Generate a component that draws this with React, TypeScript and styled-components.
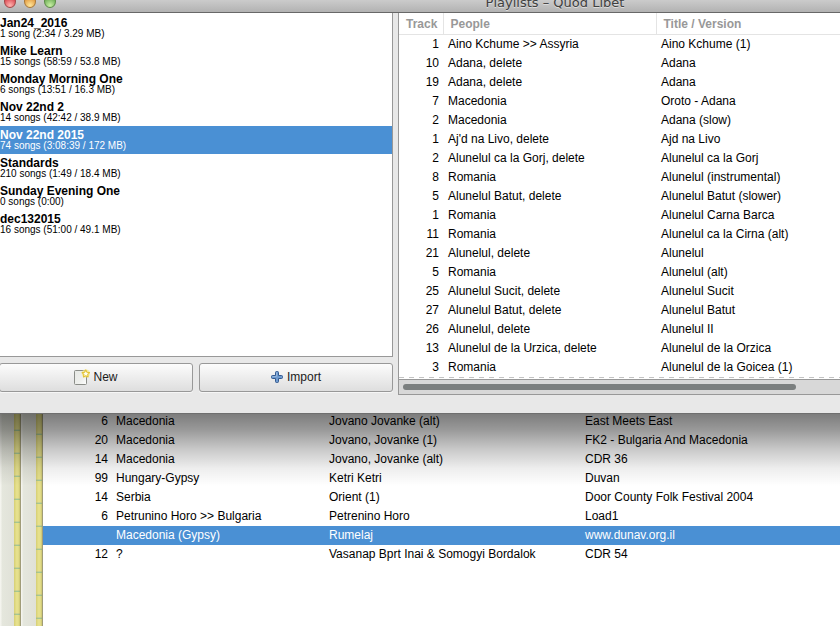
import React from "react";
import styled, { createGlobalStyle } from "styled-components";

const Global = createGlobalStyle`
  html, body, #root { height: 100%; }
  body { margin: 0; overflow: hidden; background: #fff; font: 12px/19px "Liberation Sans", Arial, sans-serif; color: #000; }
  *, *::before, *::after { box-sizing: border-box; }
`;

const Screen = styled.div`
  display: flex;
  flex-direction: column;
  height: 100%;
`;

const Window = styled.section`
  background: #e8e8e8;
  border-bottom: 1px solid #6f6f6f;
`;

const TitleBar = styled.header`
  display: flex;
  align-items: flex-end;
  height: 13px;
  overflow: hidden;
  padding-left: 4px;
  background: linear-gradient(#cbcbcb, #b2b2b2);
  border-bottom: 1px solid #686868;
`;

const Lights = styled.div`
  display: flex;
  flex: none;
  gap: 8px;
  padding-bottom: 4px;
`;

const Light = styled.button<{ $rim: string; $deep: string; $glow: string }>`
  width: 12px;
  height: 13px;
  padding: 0;
  border: 1px solid ${(p) => p.$rim};
  border-radius: 50%;
  background: radial-gradient(circle at 50% 85%, ${(p) => p.$glow}, ${(p) => p.$deep} 75%);
`;

const Title = styled.h1`
  margin: 0;
  flex: 1;
  padding-left: 214px;
  text-align: center;
  font: 13px/18px "DejaVu Sans", sans-serif;
  color: #404040;
  text-shadow: 0 1px 0 #dddddd;
`;

const Panes = styled.div`
  display: grid;
  grid-template-columns: minmax(0, 393fr) minmax(0, 442fr);
  gap: 5px;
  padding-bottom: 18px;
`;

const Side = styled.div`
  display: flex;
  flex-direction: column;
  gap: 6px;
`;

const Playlists = styled.ul`
  flex: 1;
  margin: 0;
  padding: 1px 0 0;
  list-style: none;
  background: #fff;
  border: solid #989898;
  border-width: 0 1px 1px 0;
`;

const Playlist = styled.li<{ $selected?: boolean }>`
  height: 28px;
  padding-top: 3px;
  background: ${(p) => (p.$selected ? "#4a90d4" : "transparent")};
  color: ${(p) => (p.$selected ? "#fff" : "#000")};
`;

const Name = styled.strong`
  display: block;
  line-height: 12px;
`;

const Info = styled.span`
  display: block;
  font-size: 10px;
  line-height: 10px;
`;

const Buttons = styled.div`
  display: grid;
  grid-template-columns: 1fr 1fr;
  gap: 6px;
  margin-left: -1px;
  padding-bottom: 3px;
`;

const PushButton = styled.button`
  display: flex;
  align-items: center;
  justify-content: center;
  gap: 3px;
  height: 29px;
  padding: 0;
  border: 1px solid #989898;
  border-radius: 3px;
  background: linear-gradient(#fcfcfc, #dedede);
  box-shadow: 0 1px 0 #f6f6f6;
  font: inherit;
  color: #1a1a1a;
`;

const SongPane = styled.div`
  display: flex;
  flex-direction: column;
  background: #fff;
  border: solid #989898;
  border-width: 0 0 1px 1px;
`;

const Table = styled.table`
  width: 100%;
  table-layout: fixed;
  border-collapse: collapse;
`;

const Col = styled.col<{ $w?: number }>`
  width: ${(p) => (p.$w ? `${p.$w}px` : "auto")};
`;

const Head = styled.th`
  height: 21px;
  padding: 2px 7px 0;
  text-align: left;
  line-height: 18px;
  color: #989898;
  border-bottom: 1px solid #e4e4e4;
  & + & { border-left: 1px solid #e4e4e4; }
`;

const Row = styled.tr<{ $selected?: boolean }>`
  background: ${(p) => (p.$selected ? "#4a90d4" : "transparent")};
  color: ${(p) => (p.$selected ? "#fff" : "#000")};
`;

const Cell = styled.td<{ $num?: boolean }>`
  height: 19px;
  padding: 0 4px;
  line-height: 19px;
  white-space: nowrap;
  text-align: ${(p) => (p.$num ? "right" : "left")};
`;

const SongTable = styled(Table)`
  ${Cell} { padding-left: 5px; }
`;

const MoreLine = styled.div`
  height: 2px;
  background: repeating-linear-gradient(90deg, #c4c4c4 0 5px, #fff 5px 10px) top / 100% 1px no-repeat;
`;

const ScrollTrack = styled.div`
  height: 15px;
  padding: 4px 44px 4px 4px;
  background: #d8d8d8;
  border-top: 1px solid #989898;
`;

const ScrollThumb = styled.div`
  height: 6px;
  border-radius: 3px;
  background: #7b7f7f;
`;

const Behind = styled.section`
  position: relative;
  display: flex;
  flex: 1;
  background: #fff;
  &::after {
    content: "";
    position: absolute;
    inset: 0 0 auto;
    height: 72px;
    pointer-events: none;
    background: linear-gradient(rgba(0,0,0,.51), rgba(0,0,0,.40) 22%, rgba(0,0,0,.22) 48%, rgba(0,0,0,.07) 75%, transparent);
  }
`;

const Desktop = styled.div`
  display: flex;
  flex: none;
  width: 43px;
`;

const Sheet = styled.div<{ $w: number; $shift: number }>`
  display: flex;
  justify-content: flex-end;
  width: ${(p) => p.$w}px;
  background: linear-gradient(90deg, #f4f4ee 0 1px, #e5e7dd 2px, #deded5);
  border-right: 1px solid #a09c78;
  &::after {
    content: "";
    width: 6px;
    background:
      linear-gradient(90deg, rgba(190,180,80,.4), transparent 40%, transparent 70%, rgba(150,140,60,.35)),
      repeating-linear-gradient(#e6e08c 0 21px, #cdd294 21px 22px, #a3c795 22px 23px) 0 ${(p) => p.$shift}px;
  }
`;

const Library = styled.div`
  flex: 1;
  margin-top: -2px;
`;

const playlists = [
  ["Jan24_2016", "1 song (2:34 / 3.29 MB)"],
  ["Mike Learn", "15 songs (58:59 / 53.8 MB)"],
  ["Monday Morning One", "6 songs (13:51 / 16.3 MB)"],
  ["Nov 22nd 2", "14 songs (42:42 / 38.9 MB)"],
  ["Nov 22nd 2015", "74 songs (3:08:39 / 172 MB)"],
  ["Standards", "210 songs (1:49 / 18.4 MB)"],
  ["Sunday Evening One", "0 songs (0:00)"],
  ["dec132015", "16 songs (51:00 / 49.1 MB)"],
];

const songs = [
  ["1", "Aino Kchume >> Assyria", "Aino Kchume (1)"],
  ["10", "Adana, delete", "Adana"],
  ["19", "Adana, delete", "Adana"],
  ["7", "Macedonia", "Oroto - Adana"],
  ["2", "Macedonia", "Adana (slow)"],
  ["1", "Aj'd na Livo, delete", "Ajd na Livo"],
  ["2", "Alunelul ca la Gorj, delete", "Alunelul ca la Gorj"],
  ["8", "Romania", "Alunelul (instrumental)"],
  ["5", "Alunelul Batut, delete", "Alunelul Batut (slower)"],
  ["1", "Romania", "Alunelul Carna Barca"],
  ["11", "Romania", "Alunelul ca la Cirna (alt)"],
  ["21", "Alunelul, delete", "Alunelul"],
  ["5", "Romania", "Alunelul (alt)"],
  ["25", "Alunelul Sucit, delete", "Alunelul Sucit"],
  ["27", "Alunelul Batut, delete", "Alunelul Batut"],
  ["26", "Alunelul, delete", "Alunelul II"],
  ["13", "Alunelul de la Urzica, delete", "Alunelul de la Orzica"],
  ["3", "Romania", "Alunelul de la Goicea (1)"],
];

const library = [
  ["6", "Macedonia", "Jovano Jovanke (alt)", "East Meets East"],
  ["20", "Macedonia", "Jovano, Jovanke (1)", "FK2 - Bulgaria And Macedonia"],
  ["14", "Macedonia", "Jovano, Jovanke (alt)", "CDR 36"],
  ["99", "Hungary-Gypsy", "Ketri Ketri", "Duvan"],
  ["14", "Serbia", "Orient (1)", "Door County Folk Festival 2004"],
  ["6", "Petrunino Horo >> Bulgaria", "Petrenino Horo", "Load1"],
  ["", "Macedonia (Gypsy)", "Rumelaj", "www.dunav.org.il"],
  ["12", "?", "Vasanap Bprt Inai & Somogyi Bordalok", "CDR 54"],
];

const NewIcon = () => (
  <svg width="16" height="16" viewBox="0 0 16 16" aria-hidden="true">
    <defs>
      <linearGradient id="page" x1="0" y1="0" x2="1" y2="1">
        <stop offset="0" stopColor="#e6e8e4" />
        <stop offset="0.6" stopColor="#eeefec" />
        <stop offset="1" stopColor="#ffffff" />
      </linearGradient>
    </defs>
    <rect x="0.5" y="1.5" width="12" height="14" rx="1" fill="url(#page)" stroke="#8b8d88" />
    <circle cx="11.8" cy="4.6" r="4" fill="#f6e682" opacity="0.7" />
    <path
      d="M11.8 .9l1.2 2.3 2.5.4-1.8 1.8.4 2.5-2.3-1.1-2.3 1.1.4-2.5-1.8-1.8 2.5-.4z"
      fill="#fffef0"
      stroke="#e3c334"
      strokeWidth="1.1"
      strokeLinejoin="round"
    />
  </svg>
);

const PlusIcon = () => (
  <svg width="13" height="13" viewBox="0 0 13 13" aria-hidden="true">
    <path
      d="M4.5 1.5q0-1 1-1h1q1 0 1 1v3h3q1 0 1 1v1q0 1-1 1h-3v3q0 1-1 1h-1q-1 0-1-1v-3h-3q-1 0-1-1v-1q0-1 1-1h3z"
      fill="#6f9bd0"
      stroke="#33598f"
    />
    <path d="M5.5 1.5v4h-4" fill="none" stroke="#94b5dc" />
  </svg>
);

export default function App() {
  return (
    <Screen>
      <Global />
      <Window>
        <TitleBar>
          <Lights>
            <Light aria-label="Close" $rim="#a04848" $deep="#d8404a" $glow="#ffb4b0" />
            <Light aria-label="Minimize" $rim="#a87838" $deep="#e09438" $glow="#ffe69a" />
            <Light aria-label="Zoom" $rim="#5c8a48" $deep="#67a850" $glow="#c8f0a4" />
          </Lights>
          <Title>Playlists – Quod Libet</Title>
        </TitleBar>
        <Panes>
          <Side>
            <Playlists>
              {playlists.map(([name, info], i) => (
                <Playlist key={name} $selected={i === 4}>
                  <Name>{name}</Name>
                  <Info>{info}</Info>
                </Playlist>
              ))}
            </Playlists>
            <Buttons>
              <PushButton><NewIcon />New</PushButton>
              <PushButton><PlusIcon />Import</PushButton>
            </Buttons>
          </Side>
          <SongPane>
            <SongTable>
              <colgroup><Col $w={44} /><Col $w={213} /><Col /></colgroup>
              <thead>
                <tr><Head>Track</Head><Head>People</Head><Head>Title / Version</Head></tr>
              </thead>
              <tbody>
                {songs.map(([track, people, title], i) => (
                  <Row key={i}>
                    <Cell $num>{track}</Cell>
                    <Cell>{people}</Cell>
                    <Cell>{title}</Cell>
                  </Row>
                ))}
              </tbody>
            </SongTable>
            <MoreLine />
            <ScrollTrack><ScrollThumb /></ScrollTrack>
          </SongPane>
        </Panes>
      </Window>
      <Behind>
        <Desktop>
          <Sheet $w={21} $shift={-6} />
          <Sheet $w={22} $shift={-2} />
        </Desktop>
        <Library>
          <Table>
            <colgroup><Col $w={69} /><Col $w={213} /><Col $w={256} /><Col /></colgroup>
            <tbody>
              {library.map(([track, people, title, album], i) => (
                <Row key={i} $selected={i === 6}>
                  <Cell $num>{track}</Cell>
                  <Cell>{people}</Cell>
                  <Cell>{title}</Cell>
                  <Cell>{album}</Cell>
                </Row>
              ))}
            </tbody>
          </Table>
        </Library>
      </Behind>
    </Screen>
  );
}
